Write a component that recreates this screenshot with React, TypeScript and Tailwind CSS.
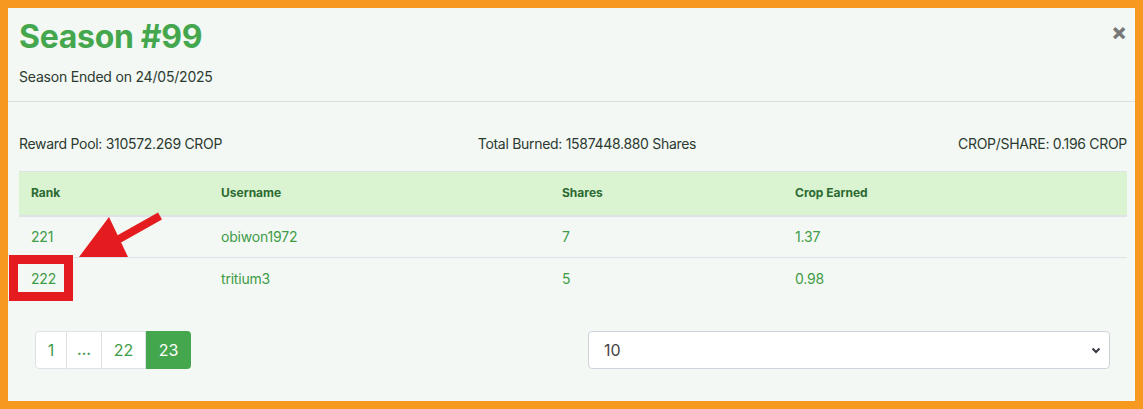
import React from 'react'

const FONT = { fontFamily: 'Inter, "Noto Sans", sans-serif' }

const rows = [
  { rank: 221, username: 'obiwon1972', shares: 7, earned: '1.37' },
  { rank: 222, username: 'tritium3', shares: 5, earned: '0.98' },
]

const Annotation = () => (
  <svg className="pointer-events-none absolute left-0 top-0" width="1143" height="409" viewBox="0 0 1143 409">
    <rect x="13.5" y="259.5" width="55" height="37" fill="none" stroke="#e41c1f" strokeWidth="9" />
    <line x1="160" y1="216" x2="112" y2="243" stroke="#e41c1f" strokeWidth="8" />
    <polygon points="79,257 109,217 128,257" fill="#e41c1f" />
  </svg>
)

export default function App() {
  return (
    <div className="relative h-[409px] w-[1143px] overflow-hidden" style={FONT}>
      <div className="flex h-full flex-col border-8 border-[#f7991f] bg-[#f3f8f4]">
        <div className="relative h-[94px] border-b border-[#dbe1e3] px-[11px] pt-[10px]">
          <h1 className="text-[32px] leading-[38px] font-bold tracking-[-0.3px] text-[#45a74d]">Season #99</h1>
          <p className="mt-[11px] text-[14px] leading-[20px] tracking-[-0.2px] text-[#2c3a30]">Season Ended on 24/05/2025</p>
          <button className="absolute right-[8px] top-[13px] text-[#777] text-[23px] leading-none font-extrabold">×</button>
        </div>

        <div className="pl-[11px] pr-[8px] pt-[32px]">
          <div className="grid grid-cols-3 items-center text-[14px] leading-[20px] tracking-[-0.3px] text-[#2c3a30]">
            <span>Reward Pool: 310572.269 CROP</span>
            <span className="pl-[28px] text-center">Total Burned: 1587448.880 Shares</span>
            <span className="text-right">CROP/SHARE: 0.196 CROP</span>
          </div>

          <table className="mt-[17px] w-full border-collapse text-left">
            <thead>
              <tr className="h-[44px] border-t border-b-2 border-[#dee2e6] bg-[#daf3d1] text-[12px] font-bold text-[#2c6a31]">
                <th className="w-[190px] px-[12px] font-bold">Rank</th>
                <th className="w-[341px] px-[12px] font-bold">Username</th>
                <th className="w-[233px] px-[12px] font-bold">Shares</th>
                <th className="px-[12px] font-bold">Crop Earned</th>
              </tr>
            </thead>
            <tbody className="text-[14px] tracking-[-0.2px] text-[#3e9c47]">
              {rows.map((r, i) => (
                <tr key={r.rank} className={i === 0 ? 'h-[42px] border-b border-[#dee2e6]' : 'h-[42px]'}>
                  <td className="px-[12px]">{r.rank}</td>
                  <td className="px-[12px]">{r.username}</td>
                  <td className="px-[12px]">{r.shares}</td>
                  <td className="px-[12px]">{r.earned}</td>
                </tr>
              ))}
            </tbody>
          </table>

          <div className="mt-[31px] grid grid-cols-2">
            <div className="pl-[16px]">
              <div className="flex h-[38px] w-fit text-[16px]">
                <span className="flex w-[32px] items-center justify-center rounded-l border border-[#dee2e6] bg-white text-[#3e9c47]">1</span>
                <span className="flex w-[35px] items-center justify-center border-y border-r border-[#dee2e6] bg-white text-[14px] font-bold text-[#3e9c47]">…</span>
                <span className="flex w-[44px] items-center justify-center border-y border-r border-[#dee2e6] bg-white text-[#3e9c47]">22</span>
                <span className="flex w-[45px] items-center justify-center rounded-r bg-[#45a74d] text-white">23</span>
              </div>
            </div>
            <div className="pl-[15px] pr-[17px]">
              <div className="flex h-[38px] items-center justify-between rounded border border-[#ced4da] bg-white pl-[15px] pr-[8px] text-[16px] text-[#444]">
                <span>10</span>
                <svg width="10" height="8" viewBox="0 0 10 8">
                  <path d="M1.5 2.5 L5 6 L8.5 2.5" fill="none" stroke="#343a40" strokeWidth="2" />
                </svg>
              </div>
            </div>
          </div>
        </div>
      </div>
      <Annotation />
    </div>
  )
}
